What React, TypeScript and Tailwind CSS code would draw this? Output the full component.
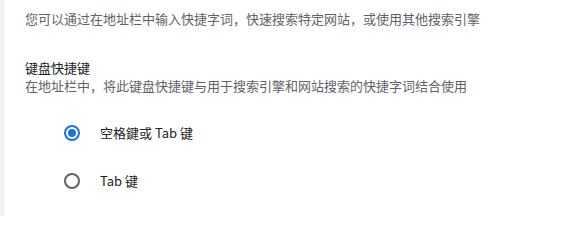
import React from "react";

const Radio = ({ checked, label }: { checked?: boolean; label: string }) => (
  <label className="flex h-12 items-center">
    <span
      className={
        checked
          ? "flex h-4 w-4 items-center justify-center rounded-full border-2 border-[#1a73e8]"
          : "flex h-4 w-4 items-center justify-center rounded-full border-2 border-[#5f6368]"
      }
    >
      {checked && <span className="h-2 w-2 rounded-full bg-[#1a73e8]" />}
    </span>
    <span className="ml-[20px] text-[13px] text-[#202124]">{label}</span>
  </label>
);

export default function App() {
  return (
    <div className="flex h-[216px] w-[571px] bg-white font-['Noto_Sans_CJK_SC','Noto_Sans',sans-serif]">
      {/* page edge */}
      <div className="w-[3px] bg-[#f1f3f4]" />
      <div className="flex-1 border-l border-[#e8eaed] pl-[21px]">
        <p className="mt-[9px] text-[13px] leading-5 text-[#5f6368]">
          您可以通过在地址栏中输入快捷字词，快速搜索特定网站，或使用其他搜索引擎
        </p>

        {/* keyboard shortcut */}
        <div className="mt-[30px]">
          <p className="text-[13px] leading-[18px] text-[#202124]">键盘快捷键</p>
          <p className="text-[13px] leading-[18px] text-[#5f6368]">
            在地址栏中，将此键盘快捷键与用于搜索引擎和网站搜索的快捷字词结合使用
          </p>
        </div>

        <div className="mt-[14px] pl-[39px]">
          <Radio checked label="空格鍵或 Tab 键" />
          <Radio label="Tab 键" />
        </div>
      </div>
    </div>
  );
}
